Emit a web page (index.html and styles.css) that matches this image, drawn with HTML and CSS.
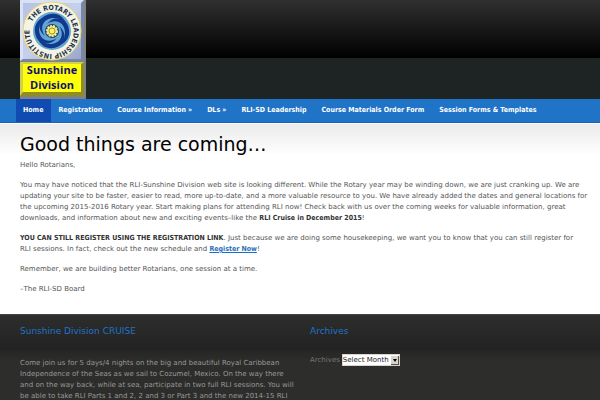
FILE: index.html
```html
<!DOCTYPE html>
<html lang="en">
<head>
    <meta charset="UTF-8">
    <meta name="viewport" content="width=device-width, initial-scale=1.0">
    <title>RLI Sunshine Division</title>
    <link rel="stylesheet" href="styles.css">
</head>
<body>
    <header class="site-header">
        <a class="logo" href="#" aria-label="Sunshine Division home">
            <svg width="66" height="99" viewBox="0 0 66 99">
                <defs>
                    <linearGradient id="plate" x1="0" y1="0" x2="1" y2="1">
                        <stop offset="0" stop-color="#b4c2e4"/>
                        <stop offset="0.5" stop-color="#c6d0ec"/>
                        <stop offset="1" stop-color="#98a6ca"/>
                    </linearGradient>
                    <path id="ring" d="M12 22 A22 22 0 1 1 11.9 22.2"/>
                    <path id="blade" d="M-7 5 C-13 -3 -9 -13 2 -13 C7 -13 11 -11 14 -8 C11 -15 5 -18 -1 -17 C-13 -16 -17 -3 -7 5 Z"/>
                </defs>
                <!-- bevelled frame -->
                <rect width="66" height="99" fill="#81827f"/>
                <rect width="64" height="61" fill="#7886a8"/>
                <path d="M0 0H64L60 4H4V58L0 61Z" fill="#d9e1f5"/>
                <rect x="3" y="3" width="58" height="56" fill="url(#plate)"/>
                <!-- seal -->
                <circle cx="32" cy="31" r="29" fill="#f5f3e4" stroke="#ecd667" stroke-width="1"/>
                <circle cx="32" cy="31" r="19" fill="#62a6d0"/>
                <text class="logo-ring"><textPath href="#ring">THE ROTARY LEADERSHIP INSTITUTE</textPath></text>
                <g transform="translate(32 31)" fill="#10398f">
                    <use href="#blade"/>
                    <use href="#blade" transform="rotate(90)"/>
                    <use href="#blade" transform="rotate(180)"/>
                    <use href="#blade" transform="rotate(270)"/>
                    <circle r="7" fill="#213f78"/>
                    <circle r="5" fill="#eee76d" stroke="#f3ec9b" stroke-width="2" stroke-dasharray="2 1"/>
                    <circle r="3" fill="#fff45c" stroke="#9a953f" stroke-width="1"/>
                </g>
                <!-- name plate -->
                <path d="M0 62H64V96H0Z" fill="#8f8c25"/>
                <path d="M0 62H64L60 65H3V92L0 96Z" fill="#d3d04c"/>
                <rect x="3" y="64" width="58" height="28" fill="#ffff08"/>
                <text class="logo-name" x="32" y="74">Sunshine</text>
                <text class="logo-name" x="32" y="89">Division</text>
            </svg>
        </a>
    </header>

    <nav class="main-nav">
        <ul>
            <li><a class="current" href="#">Home</a></li>
            <li><a href="#">Registration</a></li>
            <li><a href="#">Course Information »</a></li>
            <li><a href="#">DLs »</a></li>
            <li><a href="#">RLI-SD Leadership</a></li>
            <li><a href="#">Course Materials Order Form</a></li>
            <li><a href="#">Session Forms &amp; Templates</a></li>
        </ul>
    </nav>

    <main class="content">
        <h1>Good things are coming…</h1>
        <p>Hello Rotarians,</p>
        <p>You may have noticed that the RLI-Sunshine Division web site is looking different. While the Rotary year may be winding down, we are just cranking up. We are updating your site to be faster, easier to read, more up-to-date, and a more valuable resource to you. We have already added the dates and general locations for the upcoming 2015-2016 Rotary year. Start making plans for attending RLI now! Check back with us over the coming weeks for valuable information, great downloads, and information about new and exciting events–like the <strong>RLI Cruise in December 2015</strong>!</p>
        <p><strong>YOU CAN STILL REGISTER USING THE REGISTRATION LINK</strong>. Just because we are doing some housekeeping, we want you to know that you can still register for RLI&nbsp;sessions. In fact, check out the new schedule and <a href="#">Register Now</a>!</p>
        <p>Remember, we are building better Rotarians, one session at a time.</p>
        <p>–The RLI-SD Board</p>
    </main>

    <footer class="site-footer">
        <section class="widget">
            <h2>Sunshine Division CRUISE</h2>
            <p>Come join us for 5 days/4 nights on the big and beautiful Royal Caribbean Independence of the Seas as we sail to Cozumel, Mexico. On the way there and on the way back, while at sea, participate in two full RLI sessions. You will be able to take RLI Parts 1 and 2, 2 and 3 or Part 3 and the new 2014-15 RLI</p>
        </section>
        <section class="widget">
            <h2>Archives</h2>
            <div class="archive-row">
                <label for="archives">Archives</label>
                <span class="select-box">
                    <select id="archives">
                        <option>Select Month</option>
                    </select>
                    <svg class="select-arrow" width="8" height="9" viewBox="0 0 8 9">
                        <path d="M0 0H8V9H0Z" fill="#55524c"/>
                        <path d="M0 0H7V8H0Z" fill="#d8d4cb"/>
                        <path d="M2 3H6L4 6Z" fill="#000"/>
                    </svg>
                </span>
            </div>
        </section>
    </footer>
</body>
</html>
```
FILE: styles.css
```css
* {
    box-sizing: border-box;
}
body {
    margin: 0;
    min-height: 100vh;
    display: flex;
    flex-direction: column;
    font-family: "DejaVu Sans", Verdana, sans-serif;
    font-size: 7px;
    line-height: 11px;
    color: #555;
    background-color: #fff;
}
.site-header {
    padding: 0 20px;
    background: linear-gradient(#303030, #000 58px, #1e2424 58px);
}
.logo, .logo svg {
    display: block;
}
.logo {
    width: 66px;
}
.logo-ring {
    font-family: "DejaVu Sans Condensed", "DejaVu Sans", sans-serif;
    font-size: 7px;
    font-weight: bold;
    fill: #24334c;
}
.logo-name {
    font-family: "Open Sans", sans-serif;
    font-size: 11px;
    font-weight: bold;
    text-anchor: middle;
    fill: #11116f;
}

/* Navigation */
.main-nav {
    padding: 0 16px;
    background-color: #2074c7;
    border-bottom: 1px solid #1b62b4;
}
.main-nav ul {
    display: flex;
    margin: 0;
    padding: 0;
    list-style: none;
}
.main-nav a {
    display: block;
    padding: 0 8px 0 7px;
    font-family: "DejaVu Sans Condensed", "DejaVu Sans", sans-serif;
    line-height: 23px;
    font-weight: bold;
    white-space: nowrap;
    color: #fff;
    text-decoration: none;
}
.main-nav a.current {
    background-color: #104bb2;
}

/* Page content */
.content {
    padding: 6px 8px 10px 20px;
    border-top: 1px solid #fff;
    background: linear-gradient(#ebebeb, #fff 32px);
}
.content h1 {
    margin: 0 0 2px;
    font-size: 19px;
    font-weight: normal;
    line-height: 28px;
    color: #000;
}
.content p {
    margin: 0 0 9px;
}
.content strong, .content a {
    font-family: "DejaVu Sans Condensed", "DejaVu Sans", sans-serif;
    font-weight: bold;
}
.content strong {
    color: #333;
}
.content a {
    color: #1f6fc0;
}

/* Footer */
.site-footer {
    flex: 1;
    display: grid;
    grid-template-columns: 1fr 1fr;
    gap: 14px;
    padding: 0 14px 0 20px;
    border-top: 1px solid #444;
    color: #999;
    background: linear-gradient(#2c2e2c, #222 35px, #262625 36px, #2d2d2c 46px);
}
.widget h2 {
    margin: 0 0 6px;
    font-size: 9px;
    font-weight: normal;
    line-height: 33px;
    color: #2074c7;
}
.widget p {
    margin: 0;
    padding-top: 4px;
}
.archive-row {
    display: flex;
    align-items: center;
    gap: 2px;
    color: #777;
}
.select-box {
    display: grid;
    align-items: center;
    width: 58px;
}
.select-box select, .select-arrow {
    grid-area: 1 / 1;
}
.select-box select {
    appearance: none;
    width: 100%;
    height: 12px;
    padding: 0;
    border: 1px solid #d8d4cb;
    border-radius: 0;
    font-family: inherit;
    font-size: 7px;
    line-height: 10px;
    color: #222;
    background-color: #fff;
}
.select-arrow {
    justify-self: end;
    margin-right: 1px;
    pointer-events: none;
}
```
